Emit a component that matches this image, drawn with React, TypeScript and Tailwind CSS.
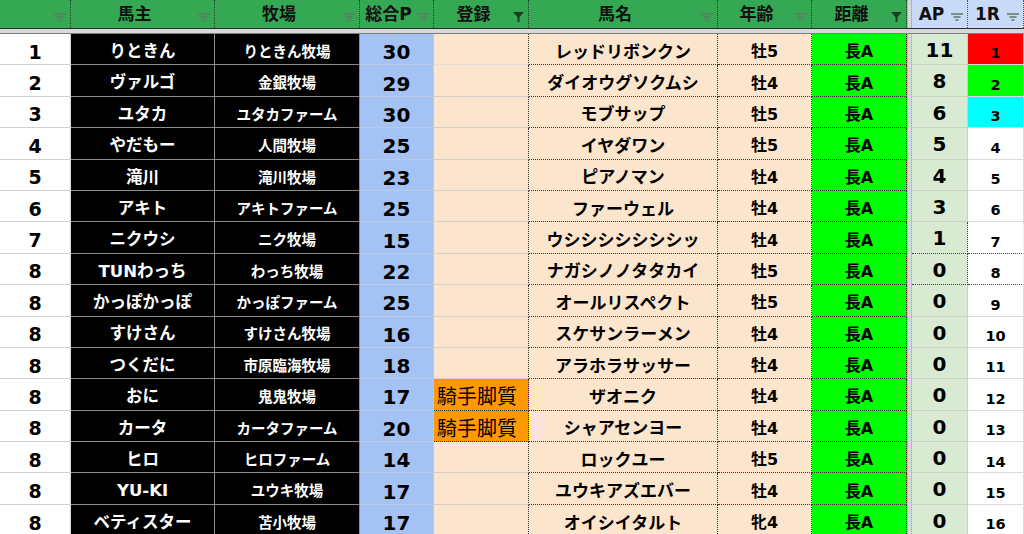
import clsx from 'clsx'

type Row = {
  rank: string
  owner: string
  farm: string
  total: string
  reg: string
  horse: string
  age: string
  dist: string
  ap: string
  r1: string
}

const rows: Row[] = [
  { rank: '1', owner: 'りときん', farm: 'りときん牧場', total: '30', reg: '', horse: 'レッドリボンクン', age: '牡5', dist: '長A', ap: '11', r1: '1' },
  { rank: '2', owner: 'ヴァルゴ', farm: '金銀牧場', total: '29', reg: '', horse: 'ダイオウグソクムシ', age: '牡4', dist: '長A', ap: '8', r1: '2' },
  { rank: '3', owner: 'ユタカ', farm: 'ユタカファーム', total: '30', reg: '', horse: 'モブサップ', age: '牡5', dist: '長A', ap: '6', r1: '3' },
  { rank: '4', owner: 'やだもー', farm: '人間牧場', total: '25', reg: '', horse: 'イヤダワン', age: '牡5', dist: '長A', ap: '5', r1: '4' },
  { rank: '5', owner: '滝川', farm: '滝川牧場', total: '23', reg: '', horse: 'ピアノマン', age: '牡4', dist: '長A', ap: '4', r1: '5' },
  { rank: '6', owner: 'アキト', farm: 'アキトファーム', total: '25', reg: '', horse: 'ファーウェル', age: '牡4', dist: '長A', ap: '3', r1: '6' },
  { rank: '7', owner: 'ニクウシ', farm: 'ニク牧場', total: '15', reg: '', horse: 'ウシシシシシシシッ', age: '牡4', dist: '長A', ap: '1', r1: '7' },
  { rank: '8', owner: 'TUNわっち', farm: 'わっち牧場', total: '22', reg: '', horse: 'ナガシノノタタカイ', age: '牡5', dist: '長A', ap: '0', r1: '8' },
  { rank: '8', owner: 'かっぽかっぽ', farm: 'かっぽファーム', total: '25', reg: '', horse: 'オールリスペクト', age: '牡5', dist: '長A', ap: '0', r1: '9' },
  { rank: '8', owner: 'すけさん', farm: 'すけさん牧場', total: '16', reg: '', horse: 'スケサンラーメン', age: '牡4', dist: '長A', ap: '0', r1: '10' },
  { rank: '8', owner: 'つくだに', farm: '市原臨海牧場', total: '18', reg: '', horse: 'アラホラサッサー', age: '牡4', dist: '長A', ap: '0', r1: '11' },
  { rank: '8', owner: 'おに', farm: '鬼鬼牧場', total: '17', reg: '騎手脚質', horse: 'ザオニク', age: '牡4', dist: '長A', ap: '0', r1: '12' },
  { rank: '8', owner: 'カータ', farm: 'カータファーム', total: '20', reg: '騎手脚質', horse: 'シャアセンヨー', age: '牡4', dist: '長A', ap: '0', r1: '13' },
  { rank: '8', owner: 'ヒロ', farm: 'ヒロファーム', total: '14', reg: '', horse: 'ロックユー', age: '牡5', dist: '長A', ap: '0', r1: '14' },
  { rank: '8', owner: 'YU-KI', farm: 'ユウキ牧場', total: '17', reg: '', horse: 'ユウキアズエバー', age: '牡4', dist: '長A', ap: '0', r1: '15' },
  { rank: '8', owner: 'ベティスター', farm: '苫小牧場', total: '17', reg: '', horse: 'オイシイタルト', age: '牝4', dist: '長A', ap: '0', r1: '16' },
]

const cols = 'grid grid-cols-[71px_144px_145px_74px_95px_189px_94px_95px_5px_56px_56px]'

function FilterIcon({ active }: { active?: boolean }) {
  if (active) {
    return (
      <svg width="11" height="10" viewBox="0 0 11 10" className="shrink-0 mt-[6px]">
        <path d="M0 0 H11 L6.5 5 V10 H4.5 V5 Z" fill="#1d3b24" />
      </svg>
    )
  }
  return (
    <svg width="12" height="8" viewBox="0 0 12 8" className="shrink-0 mt-[6px]">
      <path d="M0 1 H12 M2.5 4 H9.5 M4.5 7 H7.5" stroke="#5d7a63" strokeWidth="1.3" />
    </svg>
  )
}

function Head({ label, active, blue }: { label?: string; active?: boolean; blue?: boolean }) {
  return (
    <div
      className={clsx(
        'flex items-center pr-1 border-r border-dotted border-r-[#1f3d27] text-[17px] font-bold text-[#111]',
        blue ? 'bg-[#c9daf8] border-r-[#555]' : 'bg-[#34a853]',
      )}
    >
      <span className="flex-1 text-center leading-none">{label}</span>
      <FilterIcon active={active} />
    </div>
  )
}

function r1Bg(v: string) {
  if (v === '1') return 'bg-[#ff0000]'
  if (v === '2') return 'bg-[#00ff00]'
  if (v === '3') return 'bg-[#00ffff]'
  return 'bg-white'
}

export default function App() {
  const cell = 'flex items-center justify-center pt-[6px] border-b border-r leading-none font-bold whitespace-nowrap overflow-hidden'
  return (
    <div className="w-[1024px] h-[534px] overflow-hidden bg-white text-black font-['DejaVu_Sans','Noto_Sans_CJK_JP',sans-serif]">
      <div className={clsx(cols, 'h-[29px] border-b border-[#2a2a2a]')}>
        <Head />
        <Head label="馬主" />
        <Head label="牧場" />
        <Head label="総合P" />
        <Head label="登録" active />
        <Head label="馬名" />
        <Head label="年齢" />
        <Head label="距離" active />
        <div className="bg-[#d6d8da] border-x border-[#aeb2b6]" />
        <Head label="AP" blue />
        <Head label="1R" blue />
      </div>
      <div className="h-[5px] bg-[#d6d8da] border-b border-[#7d7d7d]" />
      {rows.map((r, i) => (
        <div key={i} className={clsx(cols, 'h-[31.4px]')}>
          <div className={clsx(cell, 'bg-white text-[19px] border-[#d2d2d2]')}>{r.rank}</div>
          <div className={clsx(cell, 'bg-black text-white text-[16.5px] border-[#8e8e8e]')}>{r.owner}</div>
          <div className={clsx(cell, 'bg-black text-white text-[14.5px] border-[#8e8e8e]')}>{r.farm}</div>
          <div className={clsx(cell, 'bg-[#a4c2f4] text-[20px] border-[#bccae2]')}>{r.total}</div>
          {r.reg ? (
            <div className={clsx(cell, 'bg-[#ff9900] text-[20px] font-normal border-dotted border-[#333] justify-start pl-[3px]')}>
              {r.reg}
            </div>
          ) : (
            <div
              className={clsx(
                cell,
                'bg-[#fce5cd] border-b-[#d8d0c6] border-r-[#333] [border-right-style:dotted]',
                i === 0 && 'border-b-[#333] [border-bottom-style:dotted]',
              )}
            />
          )}
          <div className={clsx(cell, 'bg-[#fce5cd] text-[17px] border-dotted border-[#333]')}>{r.horse}</div>
          <div className={clsx(cell, 'bg-[#fce5cd] text-[16px] border-dotted border-[#333]')}>{r.age}</div>
          <div className={clsx(cell, 'bg-[#00ff00] text-[16px] border-dotted border-[#333]')}>{r.dist}</div>
          <div className="bg-[#d6d8da] border-x border-[#b8bcc0]" />
          <div
            className={clsx(
              cell,
              'bg-[#d9ead3] text-[20px] !items-start !pt-[6px]',
              i === 6 || i === 7 ? 'border-dotted border-[#444]' : 'border-[#c5d4c0]',
            )}
          >
            {r.ap}
          </div>
          <div className={clsx(cell, r1Bg(r.r1), 'text-[14.5px] !pt-[9px] border-[#dcdcdc]', i === 6 || i === 7 ? 'border-dotted border-b-[#444]' : '')}>
            {r.r1}
          </div>
        </div>
      ))}
    </div>
  )
}
